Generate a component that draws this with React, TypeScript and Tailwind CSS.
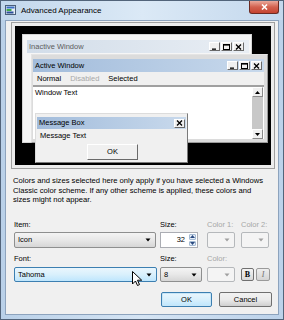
import React from 'react'

const font = "font-['Liberation_Sans','Arial',sans-serif]"

function CapBtn({ kind }: { kind: 'min' | 'max' | 'close' }) {
  return (
    <div className="flex h-[9px] w-[11px] items-center justify-center border border-b-[#696969] border-l-white border-r-[#696969] border-t-white bg-[#f0f0f0]">
      <svg width="7" height="6" viewBox="0 0 7 6">
        {kind === 'min' && <rect x="1" y="4.5" width="4" height="1.3" fill="#000" />}
        {kind === 'max' && (
          <>
            <rect x="0.5" y="0.5" width="6" height="5" fill="none" stroke="#000" strokeWidth="1" />
            <rect x="0" y="0" width="7" height="1.6" fill="#000" />
          </>
        )}
        {kind === 'close' && (
          <path d="M1 0.5L6 5.5M6 0.5L1 5.5" stroke="#000" strokeWidth="1.3" />
        )}
      </svg>
    </div>
  )
}

function Arrow({ color = '#000' }: { color?: string }) {
  return (
    <svg width="6" height="4" viewBox="0 0 6 4">
      <path d="M0.5 0.5h5L3 3.5z" fill={color} />
    </svg>
  )
}

function AppIcon() {
  return (
    <svg width="11" height="11" viewBox="0 0 11 11">
      <rect x="0.5" y="0.5" width="10" height="9" fill="#e8eef5" stroke="#4a5f7a" />
      <rect x="1.5" y="1.5" width="8" height="2" fill="#3a6fc4" />
      <rect x="1.5" y="4" width="5" height="2" fill="#3faa4a" />
      <rect x="1.5" y="6.5" width="7" height="2" fill="#2a4f9a" />
    </svg>
  )
}

function Cursor() {
  return (
    <svg width="10" height="16" viewBox="0 0 10 16" className="absolute left-[131px] top-[270px]">
      <path d="M0.5 0.5v12.5l3-3 2 4.5 2-0.9-2-4.4h4.2z" fill="#fff" stroke="#000" strokeWidth="1" strokeLinejoin="round" />
    </svg>
  )
}

function Desktop() {
  return (
    <div className={`relative h-[139px] w-[256px] overflow-hidden bg-black text-[7.5px] leading-[10px] text-black ${font}`}>
      {/* inactive window */}
      <div className="absolute left-[7px] top-[8px] h-[109px] w-[230px] border border-[#d6d6d6] bg-[#f6f6f6] pl-[4px] pr-[2px] pt-[5px]">
        <div className="flex h-[13px] items-center justify-between bg-gradient-to-r from-[#d2dde9] to-[#e9eef4] pl-[2px] pr-[5px]">
          <span className="text-[#5c5c5c]">Inactive Window</span>
          <div className="flex gap-[1px]">
            <CapBtn kind="min" />
            <CapBtn kind="max" />
            <CapBtn kind="close" />
          </div>
        </div>
      </div>

      {/* active window */}
      <div className="absolute left-[16px] top-[28px] flex h-[89px] w-[237px] flex-col border border-b-[#9a9a9a] border-l-[#e4e4e4] border-r-[#9a9a9a] border-t-[#e4e4e4] bg-[#dcdcdc] pb-[3px] pl-[1px] pr-[3px] pt-[4px]">
        <div className="flex h-[13px] shrink-0 items-center justify-between bg-gradient-to-r from-[#a2bcdb] to-[#c8d9ec] pl-[2px] pr-[2px]">
          <span>Active Window</span>
          <div className="flex gap-[1px]">
            <CapBtn kind="min" />
            <CapBtn kind="max" />
            <CapBtn kind="close" />
          </div>
        </div>
        <div className="flex h-[13px] shrink-0 items-center gap-[9px] bg-[#f0f0f0] pl-[4px]">
          <span>Normal</span>
          <span className="text-[#a8a8a8]">Disabled</span>
          <span>Selected</span>
        </div>
        <div className="h-[2px] shrink-0 bg-[#a0a0a0]" />
        <div className="flex min-h-0 flex-1 bg-white">
          <div className="flex-1 pl-[2px] pt-[1px]">Window Text</div>
          <div className="flex w-[11px] flex-col bg-[#c8c8c8]">
            <div className="flex h-[10px] items-center justify-center border border-b-[#8a8a8a] border-l-white border-r-[#8a8a8a] border-t-white bg-[#f0f0f0]">
              <svg width="5" height="3" viewBox="0 0 5 3"><path d="M0 3h5L2.5 0z" fill="#000" /></svg>
            </div>
            <div className="flex-1" />
            <div className="flex h-[10px] items-center justify-center border border-b-[#8a8a8a] border-l-white border-r-[#8a8a8a] border-t-white bg-[#f0f0f0]">
              <svg width="5" height="3" viewBox="0 0 5 3"><path d="M0 0h5L2.5 3z" fill="#000" /></svg>
            </div>
          </div>
          <div className="w-[1px] bg-white" />
        </div>
      </div>

      {/* message box */}
      <div className="absolute left-[20px] top-[87px] flex h-[50px] w-[153px] flex-col border border-b-[#7a7a7a] border-l-[#dcdcdc] border-r-[#7a7a7a] border-t-[#dcdcdc] bg-[#f0f0f0] px-[1px] pt-[3px]">
        <div className="flex h-[12px] shrink-0 items-center justify-between bg-gradient-to-r from-[#a2bcdb] to-[#c8d9ec] pl-[2px] pr-[1px]">
          <span>Message Box</span>
          <CapBtn kind="close" />
        </div>
        <div className="pl-[3px] pt-[2px]">Message Text</div>
        <div className="ml-[50px] mt-[3px] flex h-[16px] w-[51px] items-center justify-center border border-b-[#6a6a6a] border-l-white border-r-[#6a6a6a] border-t-white bg-[#f0f0f0]">
          OK
        </div>
      </div>
    </div>
  )
}

function Combo({ w, text, hover = false }: { w: string; text: string; hover?: boolean }) {
  return (
    <div
      className={`flex h-[15px] items-center justify-between rounded-[2px] border pl-[3px] pr-[4px] ${w} ${
        hover
          ? 'border-[#3c7fb1] bg-gradient-to-b from-[#eaf6fd] via-[#d9f0fc] to-[#bee6fd]'
          : 'border-[#8e8f8f] bg-gradient-to-b from-[#f4f4f4] via-[#e8e8e8] to-[#d6d6d6]'
      }`}
    >
      <span>{text}</span>
      <Arrow />
    </div>
  )
}

function DisabledCombo() {
  return (
    <div className="flex h-[15px] w-[28px] items-center justify-end rounded-[2px] border border-[#b5b8bb] bg-[#f4f4f4] pr-[4px]">
      <Arrow color="#a0a0a0" />
    </div>
  )
}

export default function App() {
  return (
    <div className={`relative flex h-[320px] w-[284px] flex-col overflow-hidden border border-[#52647a] bg-gradient-to-r from-[#b9d0e8] via-[#d6e5f4] to-[#bcd2ea] ${font}`}>
      {/* title bar */}
      <div className="flex h-[19px] shrink-0 items-center bg-gradient-to-r from-[#c2d7ec] via-[#dbe9f6] to-[#c4d8ed] pl-[4px]">
        <AppIcon />
        <span className="ml-[5px] text-[8px] text-black">Advanced Appearance</span>
        <div className="ml-auto mr-[4px] flex h-[13px] w-[30px] items-center justify-center self-start rounded-b-[3px] border border-t-0 border-[#6b2a22] bg-gradient-to-b from-[#e9a99c] via-[#d2614f] to-[#c54330]">
          <svg width="7" height="6" viewBox="0 0 7 6">
            <path d="M1 0.5L6 5.5M6 0.5L1 5.5" stroke="#fff" strokeWidth="1.6" />
          </svg>
        </div>
      </div>

      <div className="flex min-h-0 flex-1 px-[4px] pb-[4px]">
        <div className="flex flex-1 flex-col border border-[#8da3bd] bg-[#f0f0f0] text-[7.5px] text-black">
          {/* preview */}
          <div className="ml-[5px] mt-[1px] h-[147px] w-[264px] border border-[#a0a0a0] bg-[#ececec] p-[3px]">
            <Desktop />
          </div>

          <p className="ml-[7px] mt-[7px] w-[262px] text-[7.65px] leading-[9.7px]">
            Colors and sizes selected here only apply if you have selected a Windows
            <br />
            Classic color scheme. If any other scheme is applied, these colors and
            <br />
            sizes might not appear.
          </p>

          {/* item row */}
          <div className="ml-[8px] mt-[15px] flex">
            <div className="flex w-[142px] flex-col">
              <span className="h-[10px] leading-[10px]">Item:</span>
              <div className="mt-[2px] flex h-[16px] items-center justify-between rounded-[2px] border border-[#8e8f8f] bg-gradient-to-b from-[#f4f4f4] via-[#e8e8e8] to-[#d6d6d6] pl-[3px] pr-[4px]">
                <span>Icon</span>
                <Arrow />
              </div>
            </div>
            <div className="ml-[4px] flex w-[38px] flex-col">
              <span className="h-[10px] leading-[10px]">Size:</span>
              <div className="mt-[2px] flex h-[16px] items-center border border-[#abadb3] bg-white">
                <span className="flex-1 pr-[3px] text-right">32</span>
                <div className="flex h-full w-[9px] flex-col gap-[1px] p-[1px]">
                  <div className="flex flex-1 items-center justify-center rounded-[1px] border border-[#a4bad3] bg-[#e6eef8]">
                    <svg width="5" height="3" viewBox="0 0 5 3"><path d="M0 3h5L2.5 0z" fill="#2a4a80" /></svg>
                  </div>
                  <div className="flex flex-1 items-center justify-center rounded-[1px] border border-[#a4bad3] bg-[#e6eef8]">
                    <svg width="5" height="3" viewBox="0 0 5 3"><path d="M0 0h5L2.5 3z" fill="#2a4a80" /></svg>
                  </div>
                </div>
              </div>
            </div>
            <div className="ml-[9px] flex w-[28px] flex-col">
              <span className="h-[10px] leading-[10px] text-[#a6a6a6]">Color 1:</span>
              <div className="mt-[2px] flex h-[16px] items-center justify-end rounded-[2px] border border-[#b5b8bb] bg-[#f4f4f4] pr-[4px]">
                <Arrow color="#a0a0a0" />
              </div>
            </div>
            <div className="ml-[6px] flex w-[28px] flex-col">
              <span className="h-[10px] leading-[10px] text-[#a6a6a6]">Color 2:</span>
              <div className="mt-[2px] flex h-[16px] items-center justify-end rounded-[2px] border border-[#b5b8bb] bg-[#f4f4f4] pr-[4px]">
                <Arrow color="#a0a0a0" />
              </div>
            </div>
          </div>

          {/* font row */}
          <div className="ml-[8px] mt-[6px] flex">
            <div className="flex w-[143px] flex-col">
              <span className="h-[10px] leading-[10px]">Font:</span>
              <div className="mt-[3px]">
                <Combo w="w-[143px]" text="Tahoma" hover />
              </div>
            </div>
            <div className="ml-[3px] flex w-[42px] flex-col">
              <span className="h-[10px] leading-[10px]">Size:</span>
              <div className="mt-[3px]">
                <Combo w="w-[42px]" text="8" />
              </div>
            </div>
            <div className="ml-[5px] flex w-[28px] flex-col">
              <span className="h-[10px] leading-[10px] text-[#a6a6a6]">Color:</span>
              <div className="mt-[3px]">
                <DisabledCombo />
              </div>
            </div>
            <div className="ml-[6px] mt-[14px] flex h-[13px] w-[13px] items-center justify-center rounded-[2px] border border-[#707070] bg-gradient-to-b from-[#f4f4f4] to-[#d8d8d8] font-['Liberation_Serif',serif] text-[8px] font-bold">
              B
            </div>
            <div className="ml-[2px] mt-[14px] flex h-[13px] w-[14px] items-center justify-center rounded-[2px] border border-[#9a9a9a] bg-gradient-to-b from-[#eeeeee] to-[#d4d4d4] font-['Liberation_Serif',serif] text-[8px] italic text-[#707070]">
              I
            </div>
          </div>

          {/* buttons */}
          <div className="mr-[6px] mt-[10px] flex justify-end gap-[7px]">
            <div className="flex h-[15px] w-[51px] items-center justify-center rounded-[2px] border border-[#3c7fb1] bg-gradient-to-b from-[#eaf6fd] via-[#d9f0fc] to-[#bee6fd] shadow-[inset_0_0_0_1px_#c8e6f7]">
              OK
            </div>
            <div className="flex h-[15px] w-[53px] items-center justify-center rounded-[2px] border border-[#707070] bg-gradient-to-b from-[#f2f2f2] via-[#ebebeb] to-[#cfcfcf]">
              Cancel
            </div>
          </div>
        </div>
      </div>
      <Cursor />
    </div>
  )
}
